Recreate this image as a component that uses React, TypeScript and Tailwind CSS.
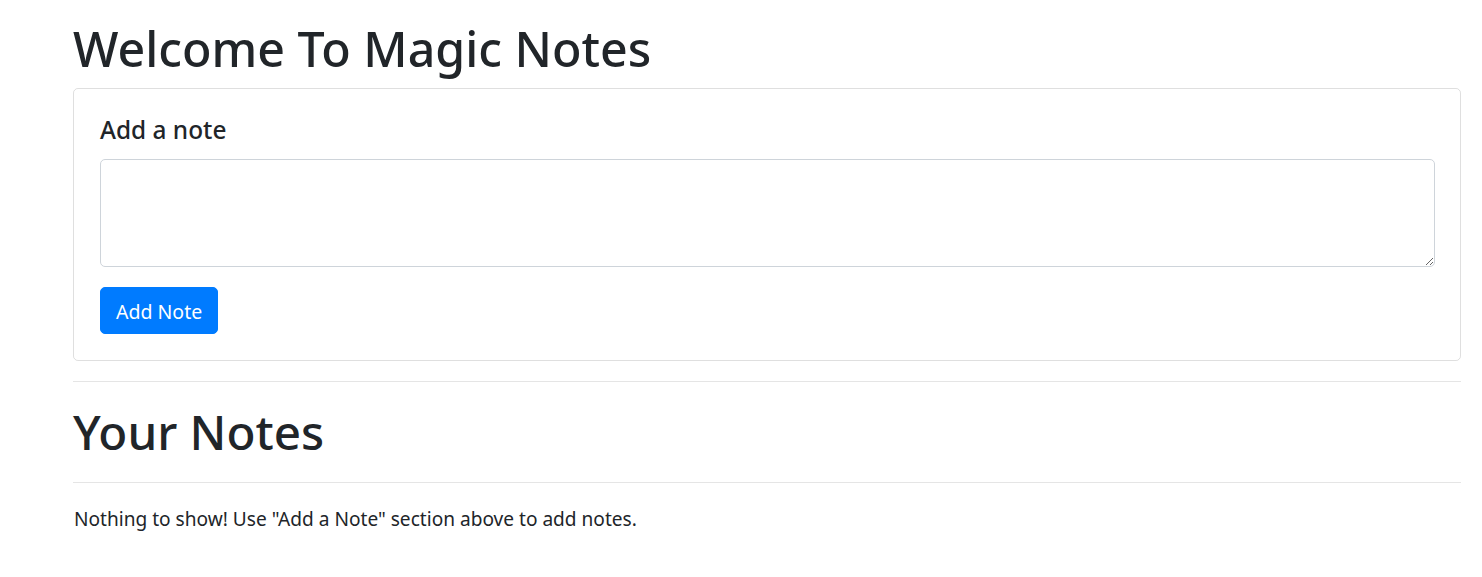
import { useState } from 'react'

const font = { fontFamily: '"Segoe UI", "Noto Sans", "Liberation Sans", sans-serif' }

export default function App() {
  const [text, setText] = useState('')

  return (
    <div className="min-h-screen bg-white text-[#212529] pl-[73px] pr-[21px] pt-[18px]" style={font}>
      <h1 className="text-[48.3px] leading-[60px] font-medium mb-[10px]">Welcome To Magic Notes</h1>
      <div className="border border-[rgba(0,0,0,0.125)] rounded-[5px] pl-[26px] pr-[25px] pt-[26px] pb-[26px]">
        <h5 className="text-[24.4px] leading-[30px] font-medium mb-[14px]">Add a note</h5>
        <textarea
          rows={3}
          value={text}
          onChange={(e) => setText(e.target.value)}
          className="block w-full h-[108px] border border-[#ced4da] rounded-[5px] px-[15px] py-[7.5px] text-[19px] leading-[30px] mb-[20px] outline-none"
        />
        <button className="h-[47px] bg-[#007bff] text-white text-[19.5px] leading-[30px] px-[15px] pt-[9px] pb-[6px] rounded-[5px] border border-[#007bff]">
          Add Note
        </button>
      </div>
      <hr className="my-[20px] border-t border-[rgba(0,0,0,0.1)]" />
      <h1 className="text-[47.5px] leading-[60px] font-medium mb-[10px]">Your Notes</h1>
      <hr className="mt-[20px] mb-[20px] border-t border-[rgba(0,0,0,0.1)]" />
      <p className="text-[19.1px] leading-[30px] pt-[1px] pl-px">Nothing to show! Use "Add a Note" section above to add notes.</p>
    </div>
  )
}
